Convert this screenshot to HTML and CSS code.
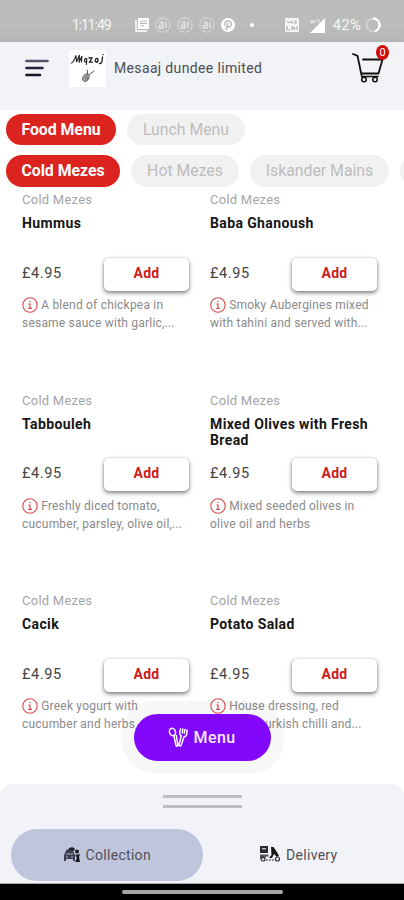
FILE: index.html
```
<!DOCTYPE html>
<html lang="en">
<head>
<meta charset="utf-8">
<title>Mesaaj dundee limited</title>
<link rel="stylesheet" href="styles.css">
</head>
<body>
<svg class="defs" aria-hidden="true">
  <symbol id="info" viewBox="0 0 16 16"><circle cx="8" cy="8" r="7.2" fill="none" stroke="#d84a4a" stroke-width="1.1"/><path d="M8 4v1.3M6.4 7H8v4.3M6.2 11.4h3.7" fill="none" stroke="#d84a4a" stroke-width="1.2"/></symbol>
  <symbol id="face" viewBox="0 0 16 16"><circle cx="8" cy="8" r="7.2" fill="none" stroke="#e0e0e0" stroke-width="1" stroke-dasharray="5 1"/><path d="M4.500 5.500H8v5.500H4.500V8.300h3M11 5v6" fill="none" stroke="#e6e6e6" stroke-width="1.3"/></symbol>
</svg>
<div class="phone">
  <div class="status">
    <span class="clock">1:11:49</span>
    <div class="notes">
      <svg width="14" height="14" viewBox="0 0 14 14"><path d="M3 0h11v11H3z" fill="#fff"/><path d="M1 2v11h11" fill="none" stroke="#fff" stroke-width="1.5"/><path d="M5 3.2h7M5 5.5h7M5 7.8h4" stroke="#b7b7b7" stroke-width="1"/></svg>
      <svg width="16" height="16"><use href="#face"/></svg>
      <svg width="16" height="16"><use href="#face"/></svg>
      <svg width="16" height="16"><use href="#face"/></svg>
      <svg width="14" height="14" viewBox="0 0 14 14"><circle cx="7" cy="7" r="7" fill="#fff"/><path d="M5 12l2-7M4.2 7.8C2.8 5.5 4.5 3 7.2 3s4 2.5 2.8 4.7C9 9.4 7 9.3 6.4 8.2" fill="none" stroke="#b7b7b7" stroke-width="1.4"/></svg>
      <i class="dot"></i>
    </div>
    <div class="signals">
      <svg width="14" height="14" viewBox="0 0 14 14"><rect width="14" height="14" rx="1" fill="#f5f5f5"/><path d="M2 3l2 2 2-2M7 3v3M9 3h3M9 5h3M2 8v4h3M7 8v4l2-3 1 3M12 8v4" fill="none" stroke="#aaa" stroke-width="1"/></svg>
      <svg width="16" height="15" viewBox="0 0 16 15"><path d="M16 0v15H1z" fill="#fff"/><path d="M2 2v3h2V2M6 2v3M8 2h2v3" fill="none" stroke="#eee" stroke-width="1"/></svg>
      <span class="pct">42%</span>
      <svg width="16" height="16" viewBox="0 0 16 16"><circle cx="8" cy="8" r="6.5" fill="none" stroke="#d2d2d2" stroke-width="2"/><path d="M8 1.5a6.5 6.5 0 0 1 2 12.7" fill="none" stroke="#fff" stroke-width="2.4"/></svg>
    </div>
  </div>

  <header class="header">
    <svg class="burger" width="24" height="18" viewBox="0 0 24 18"><g stroke-linecap="round" stroke-width="2.6"><path d="M1.500 2h21" stroke="#55536a"/><path d="M1.500 9h16" stroke="#25233f"/><path d="M1.500 16h13.500" stroke="#151326"/></g></svg>
    <svg class="logo" width="37" height="37" viewBox="0 0 37 37"><rect width="37" height="37" fill="#fff"/><g fill="none" stroke="#222" stroke-linecap="round"><path d="M2 13c2.500.5 4-5 5-7.500l.5 6.500 3-7-.5 7.500 3-6.500-.5 6" stroke-width="1.100"/><path d="M17.500 8.500c-2-.5-2.700 3.500-1.200 3.500.8 0 1.500-1.500 1.500-3.300l-.4 5.800" stroke-width="1.200"/><path d="M20 8h3l-2.500 4.200h3" stroke-width="1.300"/><path d="M28.500 8.500c-2.500-.5-3 3.500-1.200 3.500 1 0 1.600-1.500 1.700-3.300l-.3 3.300" stroke-width="1.300"/><path d="M33.500 7c-.2 3.500-.5 7-3 6.500M34 4.500v.2" stroke-width="1.300"/><path d="M18.500 25l-.3-5M20 25l5-4" stroke="#555"/></g><path d="M16.500 24c-2 1-3.500 3.500-2.800 6 .8 2.200 3.800 2.200 5.500-.5 1.600-2.500 1.300-4.500 0-5.500z" fill="#aaa" stroke="#555" stroke-width=".8"/><path d="M15.500 29l3-4M17 31l2.500-4" stroke="#444" stroke-width=".8"/></svg>
    <h1 class="shop">Mesaaj dundee limited</h1>
    <div class="cart">
      <svg width="34" height="32" viewBox="0 0 34 32"><g fill="none" stroke="#111" stroke-linecap="round" stroke-linejoin="round"><path d="M2 2l4.500 1.800L10.500 23M12 7.500h19.500L27.500 21.500H10.300" stroke-width="1.800"/><path d="M10.500 24.500h16.500" stroke-width="1.400"/><circle cx="13" cy="27.500" r="2.300" stroke-width="1.500"/><circle cx="24" cy="27.500" r="2.300" stroke-width="1.500"/></g></svg>
      <span class="badge">0</span>
    </div>
  </header>

  <nav class="pills menus"><span class="pill on w110">Food Menu</span><span class="pill w118">Lunch Menu</span></nav>
  <nav class="pills cats"><span class="pill on w114">Cold Mezes</span><span class="pill w108">Hot Mezes</span><span class="pill w138">Iskander Mains</span><span class="pill w138"></span></nav>

  <main class="grid">
    <article class="item"><p class="cat">Cold Mezes</p><h2>Hummus</h2><div class="buy"><span>£4.95</span><button>Add</button></div><p class="desc"><svg class="info"><use href="#info"/></svg> A blend of chickpea in<br>sesame sauce with garlic,...</p></article>
    <article class="item"><p class="cat">Cold Mezes</p><h2>Baba Ghanoush</h2><div class="buy"><span>£4.95</span><button>Add</button></div><p class="desc"><svg class="info"><use href="#info"/></svg> Smoky Aubergines mixed<br>with tahini and served with...</p></article>
    <article class="item"><p class="cat">Cold Mezes</p><h2>Tabbouleh</h2><div class="buy"><span>£4.95</span><button>Add</button></div><p class="desc"><svg class="info"><use href="#info"/></svg> Freshly diced tomato,<br>cucumber, parsley, olive oil,...</p></article>
    <article class="item"><p class="cat">Cold Mezes</p><h2>Mixed Olives with Fresh<br>Bread</h2><div class="buy"><span>£4.95</span><button>Add</button></div><p class="desc"><svg class="info"><use href="#info"/></svg> Mixed seeded olives in<br>olive oil and herbs</p></article>
    <article class="item"><p class="cat">Cold Mezes</p><h2>Cacik</h2><div class="buy"><span>£4.95</span><button>Add</button></div><p class="desc"><svg class="info"><use href="#info"/></svg> Greek yogurt with<br>cucumber and herbs</p></article>
    <article class="item"><p class="cat">Cold Mezes</p><h2>Potato Salad</h2><div class="buy"><span>£4.95</span><button>Add</button></div><p class="desc"><svg class="info"><use href="#info"/></svg> House dressing, red<br><span class="tail">urkish chilli and...</span></p></article>
  </main>

  <div class="halo"><button class="fab">
    <svg width="20" height="21" viewBox="0 0 20 21"><g fill="none" stroke="#fff" stroke-width="1.500" stroke-linecap="round" stroke-linejoin="round"><ellipse cx="4.500" cy="5" rx="3" ry="3.700" transform="rotate(-20 4.500 5)"/><path d="M6 9l2 9.500c.4 1.200 2 .8 1.800-.5L8.300 8.500M12.500 2l-.8 3.500c-.2 2 .6 3 1.500 3.500L11 17.500c-.2 1.500 1.600 2 2.200.6L16 9.800c1.500-.2 2.500-1.300 2.800-3L19 3M14.800 2l-.5 4M17 2.500L16.300 6"/></g></svg>
    <span>Menu</span></button></div>

  <section class="sheet">
    <div class="grip"></div>
    <div class="modes">
      <div class="mode on">
        <svg width="18" height="17" viewBox="0 0 18 17"><path d="M2 6l1.500-3.500h6L11 6l1 2v6h-2v-2H3v2H1V8z" fill="#3c3f50"/><path d="M3 7h7M3 10h2M8 10h2" stroke="#aeb3ca"/><path d="M5 2.500C7 0 10-.5 12 2l-1 2z" fill="#222"/><circle cx="14" cy="4.500" r="2" fill="#171924"/><path d="M12 8l5-1-1 3 1 5h-5l2-4z" fill="#171924"/></svg>
        <span>Collection</span>
      </div>
      <div class="mode">
        <svg class="scooter" width="22" height="18" viewBox="0 0 22 18"><path d="M1 1h8v7H1z" fill="#292929"/><path d="M3 3h4v1.500H3z" fill="#bbb"/><path d="M1 9.500h8l1 2H7l-1 2H1z" fill="#555"/><path d="M12 2h2.500l4 6 1.500 3-2 1-3-3-2 4h-3l2.500-3z" fill="#161616"/><g fill="none" stroke="#333" stroke-width="1.200"><circle cx="4" cy="14" r="2"/><circle cx="18.500" cy="14" r="2"/><path d="M7 15h8" stroke-dasharray="2 1"/></g></svg>
        <span>Delivery</span>
      </div>
    </div>
  </section>
  <div class="navbar"><i></i></div>
</div>
</body>
</html>
```

FILE: styles.css
```
* { box-sizing: border-box; }
body { margin: 0; background: #fff; font-family: Roboto, "Liberation Sans", sans-serif; }
h1, h2, p { margin: 0; }
button { border: 0; padding: 0; font: inherit; }
.defs { position: absolute; width: 0; height: 0; }
.phone { position: relative; width: 404px; height: 900px; overflow: hidden; display: flex; flex-direction: column; }

.status { height: 42px; flex: none; padding: 8px 22px 0 72px; display: flex; align-items: center; justify-content: space-between; background: linear-gradient(#bcbcbc 0 60%, #b4b5b5); color: #f6f6f6; }
.clock { font-size: 14px; width: 63px; letter-spacing: -1.1px; }
.notes { display: flex; align-items: center; gap: 6px; flex: 1; }
.dot { width: 4px; height: 4px; border-radius: 50%; background: #fff; margin-left: 9px; }
.signals { display: flex; align-items: center; margin-right: 1px; }
.signals svg + svg { margin-left: 10px; }
.pct { font-size: 15px; margin: 0 4px 0 8px; letter-spacing: .1px; }

.header { height: 68px; flex: none; padding: 8px 19px 0 25px; display: flex; align-items: flex-start; background: #f1f3f6; }
.burger { margin-top: 9px; }
.logo { margin-left: 20px; }
.shop { margin: 9px 0 0 8px; font-size: 14px; line-height: 18px; font-weight: 400; letter-spacing: .35px; color: #4c4d50; white-space: nowrap; }
.cart { position: relative; margin: 2px 0 0 auto; width: 34px; height: 32px; }
.badge { position: absolute; right: -4px; top: -7px; width: 13px; height: 15px; border-radius: 50%; background: #d40b0b; color: #fff; font-size: 11px; line-height: 15px; text-align: center; }

.pills { display: flex; flex: none; gap: 11px; padding-left: 6px; height: 31px; }
.menus { margin-top: 4px; }
.cats { margin-top: 10px; height: 32px; }
.pill { flex: none; padding-bottom: 1px; border-radius: 16px; background: #f1f1f1; color: #bdbdbd; font-size: 15.800px; display: flex; align-items: center; justify-content: center; }
.pill.on { background: #db241f; color: #fff; font-weight: 700; }
.w110 { width: 110px; }
.w118 { width: 118px; }
.w114 { width: 114px; }
.w108 { width: 108px; }
.w138 { width: 139px; }

.grid { display: grid; grid-template-columns: 167px 167px; grid-auto-rows: 200.500px; column-gap: 21px; padding: 5px 0 0 22px; }
.item { display: flex; flex-direction: column; }
.cat { font-size: 13px; line-height: 16px; color: #a5a5a5; letter-spacing: .25px; }
.item h2 { margin-top: 7px; height: 36px; font-size: 14px; line-height: 16px; font-weight: 700; color: #151515; letter-spacing: .38px; white-space: nowrap; }
.buy { margin-top: 6px; height: 34px; display: flex; align-items: center; justify-content: space-between; font-size: 14.500px; line-height: 17px; color: #444; letter-spacing: .6px; }
.buy span { margin-top: -2px; }
.buy button { width: 85px; height: 33px; padding-bottom: 2px; border-radius: 5px; background: #fff; color: #cf1a1a; font-size: 14px; font-weight: 700; letter-spacing: .3px; box-shadow: 0 2px 4px rgba(0,0,0,.5), 0 0 2px rgba(0,0,0,.18); }
.desc { margin-top: 5px; font-size: 12px; line-height: 18px; color: #8a8a8a; letter-spacing: .21px; white-space: nowrap; }
.info { width: 16px; height: 16px; vertical-align: -4px; }
.tail { padding-left: 55px; }

.halo { position: absolute; left: 122px; top: 701px; width: 162px; height: 72px; border-radius: 32px; background: rgba(0,0,0,.03); padding: 13px 13px 0 12px; }
.fab { width: 137px; height: 47px; border-radius: 24px; background: #8208fb; color: #f4e9ff; display: flex; align-items: center; justify-content: center; gap: 6px; padding-right: 2px; font-size: 16px; font-weight: 500; letter-spacing: .4px; }

.sheet { position: absolute; left: 0; right: 0; top: 784px; height: 100px; border-radius: 12px 12px 0 0; background: #f2f3f8; padding: 11px 10px 0 11px; border-bottom: 1px solid #aaa; }
.grip { width: 79px; height: 13px; margin: 0 auto; border: solid #bdbec1; border-width: 3px 0; }
.modes { display: flex; margin-top: 21px; }
.mode { width: 192px; height: 52px; border-radius: 26px; display: flex; align-items: center; justify-content: center; gap: 5px; font-size: 14px; color: #505157; letter-spacing: .3px; }
.mode.on { background: #c0c5de; }
.scooter { margin-bottom: 3px; }
.navbar { position: absolute; left: 0; right: 0; bottom: 0; height: 16px; background: #000; display: flex; justify-content: center; align-items: center; }
.navbar i { width: 161px; height: 4px; border-radius: 2px; background: #a6a6a6; }
```
